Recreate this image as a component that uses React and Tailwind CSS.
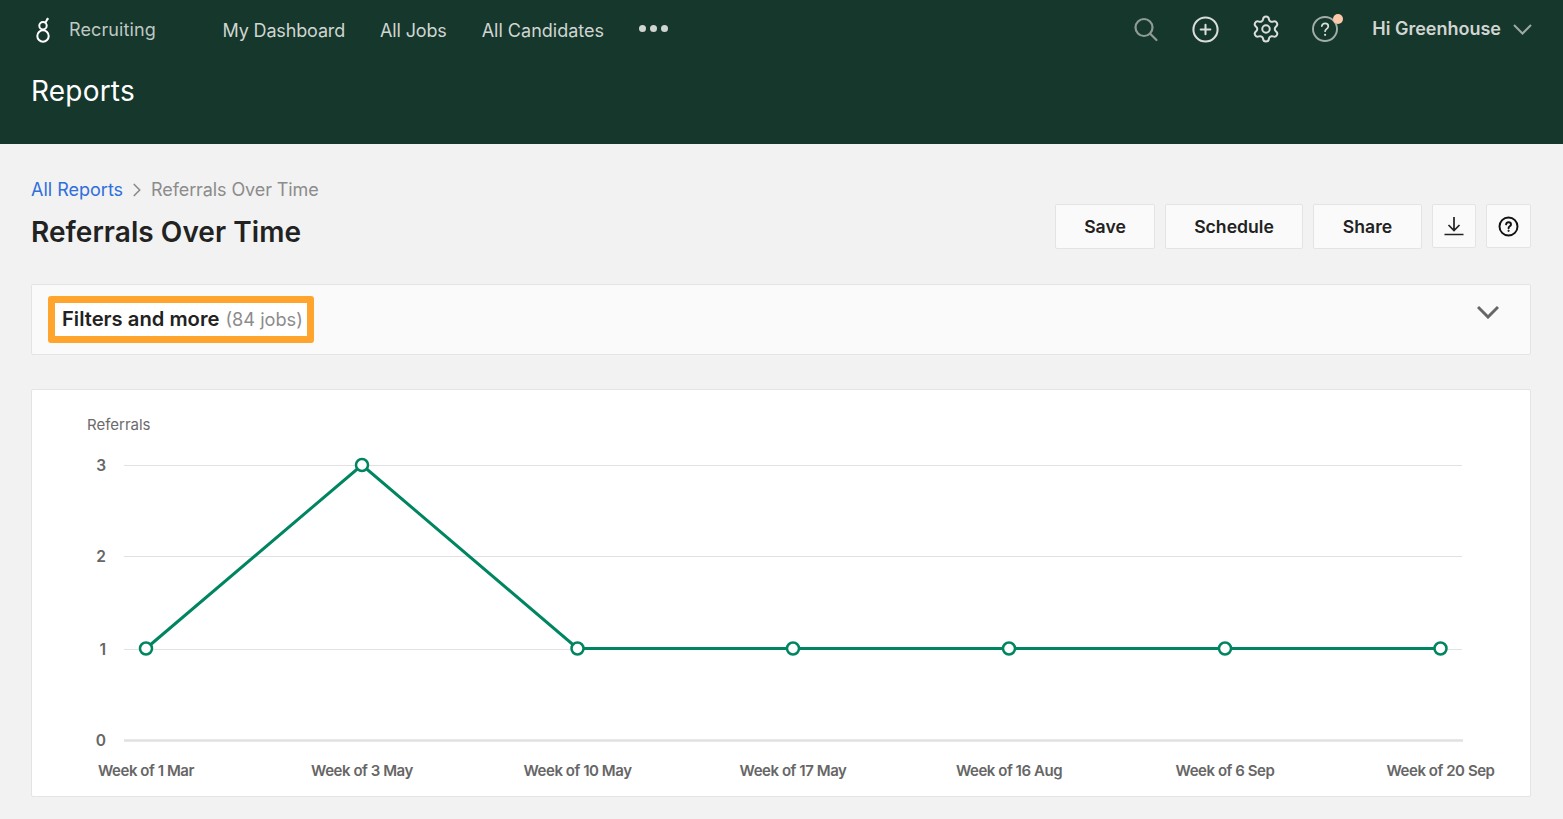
import React from "react";
import { CirclePlus, Settings, ChevronRight } from "lucide-react";

function Logo() {
  return (
    <svg width="14" height="26" viewBox="0 0 14 26" fill="none" stroke="#ffffff" strokeWidth="2">
      <circle cx="7" cy="19" r="5.7" />
      <circle cx="7" cy="8.800" r="3.7" />
      <path d="M9.500 5.500L11.500 2" />
      <circle cx="11.600" cy="2" r="0.8" fill="#ffffff" strokeWidth="1" />
    </svg>
  );
}

function HelpIcon({ stroke = "#ffffff", qStroke, size = 28, sw = 2, qw = 2 }) {
  const q = qStroke || stroke;
  return (
    <svg width={size} height={size} viewBox="0 0 28 28" fill="none" strokeLinecap="round">
      <circle cx="14" cy="14" r="12" stroke={stroke} strokeWidth={sw} />
      <path d="M10.800 11.200c.3-1.800 1.600-2.800 3.300-2.800 1.800 0 3.200 1.200 3.200 2.800 0 2.500-3.200 2.700-3.200 5" stroke={q} strokeWidth={qw} />
      <circle cx="14.100" cy="19.800" r="0.5" fill={q} stroke={q} strokeWidth={qw * 0.7} />
    </svg>
  );
}

const xs = [146, 362, 577.5, 793, 1009, 1225, 1440.5];
const ys = [648.5, 465, 648.5, 648.5, 648.5, 648.5, 648.5];
const xLabels = ["Week of 1 Mar", "Week of 3 May", "Week of 10 May", "Week of 17 May", "Week of 16 Aug", "Week of 6 Sep", "Week of 20 Sep"];
const ox = 32, oy = 390;

function Chart() {
  const pts = xs.map((x, i) => `${x - ox},${ys[i] - oy}`).join(" ");
  const grid = [["3", 465.5], ["2", 556.5], ["1", 649.5]];
  return (
    <svg width="1498" height="406" viewBox="0 0 1498 406" className="block" fontFamily="Inter, sans-serif">
      <text x={87 - ox} y={430 - oy} fontSize="15" fill="#6b6b6b">Referrals</text>
      {grid.map(([l, y]) => (
        <g key={l}>
          <line x1={124 - ox} x2={1462 - ox} y1={y - oy} y2={y - oy} stroke="#e1e1e1" strokeWidth="1" />
          <text x={106 - ox} y={y - oy + 5} textAnchor="end" fontSize="15.500" fontWeight="600" fill="#666666">{l}</text>
        </g>
      ))}
      <line x1={124 - ox} x2={1463 - ox} y1={740.5 - oy} y2={740.5 - oy} stroke="#e1e1e1" strokeWidth="2.500" />
      <text x={106 - ox} y={745.5 - oy} textAnchor="end" fontSize="15.500" fontWeight="600" fill="#666666">0</text>
      <polyline points={pts} fill="none" stroke="#008561" strokeWidth="3" />
      {xs.map((x, i) => (
        <circle key={i} cx={x - ox} cy={ys[i] - oy} r="6" fill="#ffffff" stroke="#008561" strokeWidth="2.500" />
      ))}
      {xs.map((x, i) => (
        <text key={i} x={x - ox} y={776 - oy} textAnchor="middle" fontSize="15" fontWeight="600" letterSpacing="-0.45" fill="#666666">{xLabels[i]}</text>
      ))}
    </svg>
  );
}

function Btn({ children, className = "" }) {
  return (
    <button className={`h-[45px] flex items-center justify-center bg-[#fafafa] border border-[#e4e4e4] rounded-[2px] text-[17.6px] font-semibold text-[#222222] ${className}`}>
      {children}
    </button>
  );
}

export default function App() {
  return (
    <div className="w-[1563px] h-[819px] overflow-hidden bg-[#f2f2f2] font-['Inter',sans-serif]">
      <header className="h-[144px] bg-[#16372b] pl-[31px] pr-[32px] pt-[14px]">
        <div className="flex items-center h-[31px]">
          <div className="w-[38px] pl-[5px] flex items-center"><Logo /></div>
          <span className="text-[18px] text-[#bfc8c4] w-[153.500px] tracking-[0.1px]">Recruiting</span>
          <nav className="flex items-center gap-[35px] text-[18px] text-[#d0d5d2] tracking-[-0.15px] mt-[2px]">
            <span>My Dashboard</span>
            <span>All Jobs</span>
            <span className="tracking-[0px]">All Candidates</span>
            <span className="flex gap-[4px] items-center -mt-[4px]">
              <i className="block w-[7px] h-[7px] rounded-full bg-[#d0d5d2]" />
              <i className="block w-[7px] h-[7px] rounded-full bg-[#d0d5d2]" />
              <i className="block w-[7px] h-[7px] rounded-full bg-[#d0d5d2]" />
            </span>
          </nav>
          <div className="ml-auto flex items-center">
            <div className="flex items-center gap-[31px] text-[#d9dedb] -mt-[1px]">
              <svg width="28" height="28" viewBox="0 0 28 28" fill="none" stroke="#8f9c96" strokeWidth="2.200" strokeLinecap="round">
                <circle cx="12" cy="12.500" r="8.500" />
                <path d="M18.500 19l6 6" />
              </svg>
              <CirclePlus size={29} strokeWidth={1.7} />
              <Settings size={30} strokeWidth={1.6} />
              <div className="relative w-[28px] h-[28px] -left-[1px]">
                <HelpIcon stroke="#a3aea8" qStroke="#d9dedb" size={28} sw={1.900} qw={1.700} />
                <span className="absolute -top-[1px] right-[-4px] w-[10px] h-[10px] rounded-full bg-[#fbc9a9]" />
              </div>
            </div>
            <span className="ml-[32px] text-[18px] font-semibold text-[#d0d5d2] tracking-[0px] -mt-[2px]">Hi Greenhouse</span>
            <svg width="19" height="11" viewBox="0 0 19 11" fill="none" stroke="#9fa9a4" strokeWidth="2" className="ml-[12px] -mr-[1px]">
              <path d="M1 1l8.500 8.500L18 1" />
            </svg>
          </div>
        </div>
        <h1 className="mt-[29px] text-[28px] leading-[34px] text-white font-normal tracking-[0.2px]">Reports</h1>
      </header>

      <main className="pl-[31px] pr-[32px] pt-[34px]">
        <div className="flex items-center h-[23px] text-[18px]">
          <a className="text-[#2e6fdc]">All Reports</a>
          <ChevronRight size={22} strokeWidth={1.800} className="mx-[3px] text-[#8a8a8a]" />
          <span className="text-[#8c8c8c] tracking-[-0.1px]">Referrals Over Time</span>
        </div>

        <div className="flex justify-between">
          <h2 className="mt-[13px] text-[28px] leading-[36px] font-semibold text-[#222222] tracking-[0.05px]">Referrals Over Time</h2>
          <div className="flex gap-[10px] mt-[3px]">
            <Btn className="w-[100px] pt-[2px]">Save</Btn>
            <Btn className="w-[138px] pt-[2px]">Schedule</Btn>
            <Btn className="w-[109px] pt-[2px]">Share</Btn>
            <Btn className="w-[44px] !h-[44px]">
              <svg width="20" height="20" viewBox="0 0 20 20" fill="none" stroke="#222222" strokeWidth="1.700">
                <path d="M10 1v13M4.500 9l5.500 5.500L15.500 9M.5 18.500h19" />
              </svg>
            </Btn>
            <Btn className="w-[45px] !h-[44px]">
              <HelpIcon stroke="#111111" size={21} sw={2.600} qw={2.600} />
            </Btn>
          </div>
        </div>

        <section className="mt-[34px] h-[71px] bg-[#fafafa] border border-[#e4e4e4] rounded-[2px] pl-[16px] pr-[31px] flex items-center justify-between">
          <div className="h-[47px] w-[266px] border-[7px] border-[#ffa42d] rounded-[3px] bg-white flex items-center pl-[7px] -mt-[1px]">
            <span className="text-[20.200px] font-semibold text-[#222222]">Filters and more</span>
            <span className="ml-[6px] mt-[2px] text-[18.200px] text-[#8c8c8c]">(84 jobs)</span>
          </div>
          <svg width="22" height="14" viewBox="0 0 22 14" fill="none" stroke="#666666" strokeWidth="3" className="-mt-[15px]">
            <path d="M1 2l10 10L21 2" />
          </svg>
        </section>

        <section className="mt-[34px] h-[408px] bg-white border border-[#e4e4e4] rounded-[2px] overflow-hidden">
          <Chart />
        </section>
      </main>
    </div>
  );
}
